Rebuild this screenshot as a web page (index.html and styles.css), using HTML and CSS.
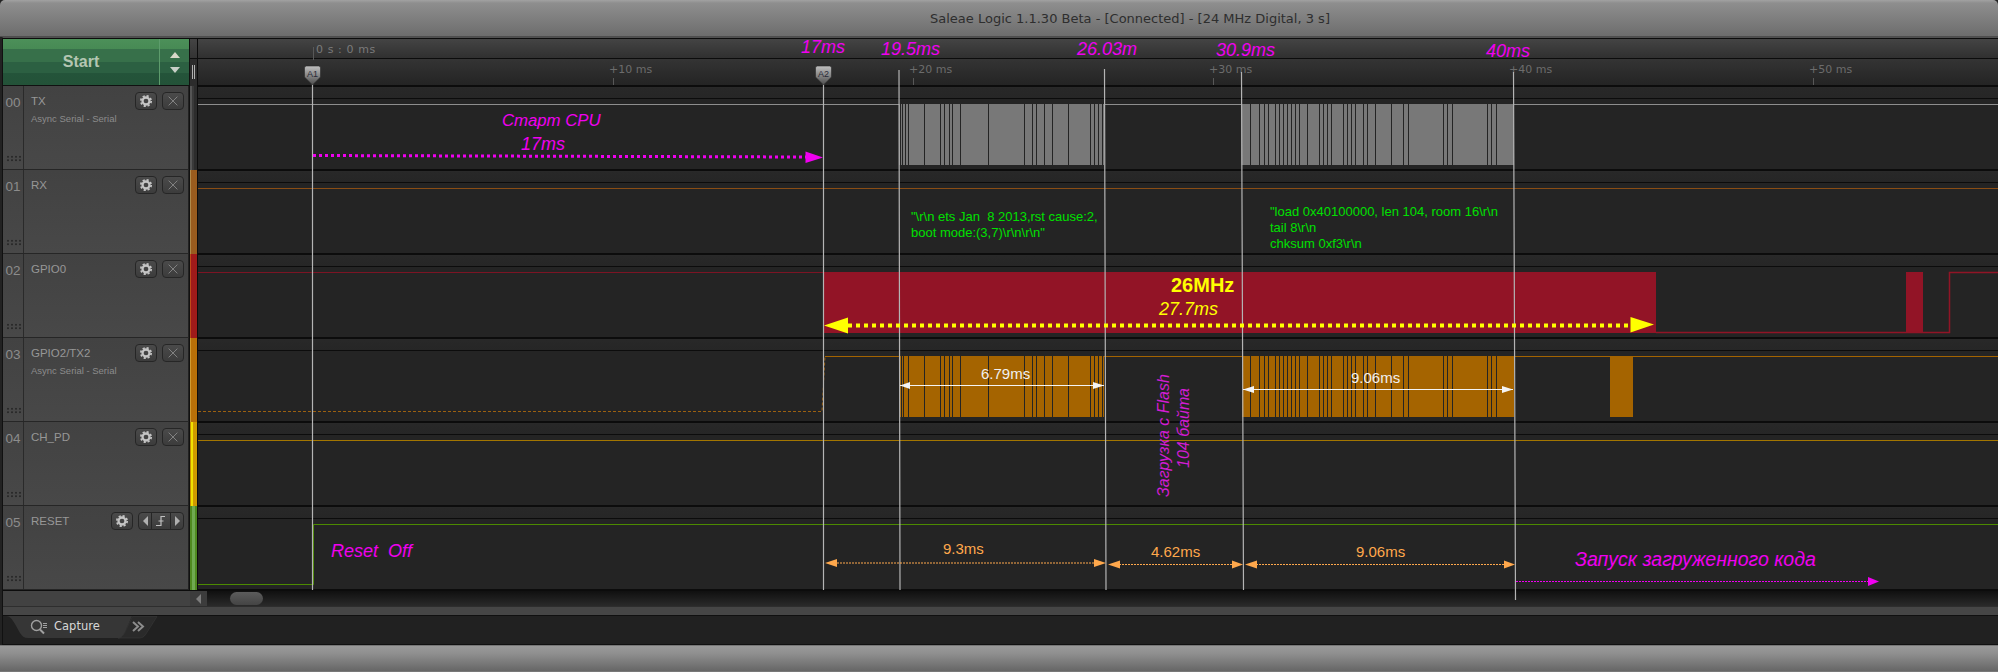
FILE: index.html
```html
<!DOCTYPE html>
<html lang="en">
<head>
<meta charset="utf-8">
<title>Saleae Logic</title>
<link rel="stylesheet" href="styles.css">
</head>
<body>
<svg class="defs" width="0" height="0" aria-hidden="true">
  <defs>
    <symbol id="gear" viewBox="0 0 16 16">
      <circle cx="8" cy="8" r="4" fill="none" stroke="#c4c4c4" stroke-width="2.6"/>
      <circle cx="8" cy="8" r="5.9" fill="none" stroke="#c4c4c4" stroke-width="2" stroke-dasharray="2.5 2.13"/>
    </symbol>
    <symbol id="cross" viewBox="0 0 16 16">
      <path d="M3 3 13 13M13 3 3 13" stroke="#8a8a8a" stroke-width="1" fill="none"/>
    </symbol>
    <linearGradient id="pin" x1="0" y1="0" x2="0" y2="1">
      <stop offset="0" stop-color="#c0c0c0"/>
      <stop offset="1" stop-color="#4c4c4c"/>
    </linearGradient>
  </defs>
</svg>

<div class="app">
  <header class="titlebar">Saleae Logic 1.1.30 Beta - [Connected] - [24 MHz Digital, 3 s]</header>

  <div class="workspace">
    <div class="toprow">
      <div class="start">
        <div class="start-label">Start</div>
        <div class="start-arrows">
          <span class="tri tri-up"></span>
          <span class="tri tri-down"></span>
        </div>
      </div>
      <div class="strip-head"><div class="strip-head-top"></div><div class="strip-head-bot"><i></i><i></i></div></div>
      <div class="ruler">
        <div class="ruler-top"><span class="abs-time">0 s : 0 ms</span></div>
        <div class="ruler-bot">
          <span class="tick">+10 ms</span>
          <span class="tick">+20 ms</span>
          <span class="tick">+30 ms</span>
          <span class="tick">+40 ms</span>
          <span class="tick">+50 ms</span>
        </div>
      </div>
    </div>

    <div class="channels">
      <!-- 00 -->
      <div class="channel">
        <div class="ch-head">
          <div class="ch-num">00<span class="grip"></span></div>
          <div class="ch-info">
            <div class="ch-top"><span class="ch-name">TX</span>
              <span class="btn"><svg class="ico"><use href="#gear"/></svg></span>
              <span class="btn"><svg class="ico"><use href="#cross"/></svg></span></div>
            <div class="ch-sub">Async Serial - Serial</div>
          </div>
        </div>
        <div class="strip strip-gray"></div>
        <div class="ch-wave">
          <svg class="wave" viewBox="198 0 1800 84">
            <path class="l-gray" d="M198 18.5H900M1104 18.5H1242M1514 18.5H1998"/>
            <rect class="b-gray" x="899" y="18" width="205" height="61"/>
            <rect class="b-gray" x="1241.5" y="18" width="272.5" height="61"/>
            <path class="stripes" d="M900.5 18V79M902.5 18V79M905.5 18V79M908.5 18V79M924.5 18V79M940.5 18V79M944.5 18V79M949.5 18V79M952.5 18V79M960.5 18V79M988.5 18V79M1024.5 18V79M1032.5 18V79M1036.5 18V79M1044.5 18V79M1052.5 18V79M1068.5 18V79M1090.5 18V79M1094.5 18V79M1098.5 18V79M1102.5 18V79"/>
            <path class="stripes" d="M1250.5 18V79M1259.5 18V79M1264.5 18V79M1268.5 18V79M1275.5 18V79M1279.5 18V79M1283.5 18V79M1287.5 18V79M1291.5 18V79M1295.5 18V79M1299.5 18V79M1307.5 18V79M1319.5 18V79M1323.5 18V79M1327.5 18V79M1331.5 18V79M1343.5 18V79M1347.5 18V79M1351.5 18V79M1355.5 18V79M1363.5 18V79M1367.5 18V79M1375.5 18V79M1391.5 18V79M1403.5 18V79M1408.5 18V79M1443.5 18V79M1447.5 18V79M1452.5 18V79M1487.5 18V79M1491.5 18V79M1496.5 18V79"/>
          </svg>
        </div>
      </div>
      <!-- 01 -->
      <div class="channel">
        <div class="ch-head">
          <div class="ch-num">01<span class="grip"></span></div>
          <div class="ch-info">
            <div class="ch-top"><span class="ch-name">RX</span>
              <span class="btn"><svg class="ico"><use href="#gear"/></svg></span>
              <span class="btn"><svg class="ico"><use href="#cross"/></svg></span></div>
          </div>
        </div>
        <div class="strip strip-brown"></div>
        <div class="ch-wave">
          <svg class="wave" viewBox="198 0 1800 84">
            <path class="l-brown" d="M198 18.5H1998"/>
          </svg>
        </div>
      </div>
      <!-- 02 -->
      <div class="channel">
        <div class="ch-head">
          <div class="ch-num">02<span class="grip"></span></div>
          <div class="ch-info">
            <div class="ch-top"><span class="ch-name">GPIO0</span>
              <span class="btn"><svg class="ico"><use href="#gear"/></svg></span>
              <span class="btn"><svg class="ico"><use href="#cross"/></svg></span></div>
          </div>
        </div>
        <div class="strip strip-red"></div>
        <div class="ch-wave">
          <svg class="wave" viewBox="198 0 1800 84">
            <path class="l-red" d="M198 18.5H824"/>
            <rect class="b-red" x="823.5" y="18" width="832.5" height="61"/>
            <rect class="b-red" x="1906" y="18" width="17" height="61"/>
            <path class="l-red2" d="M1656 78.5H1949.5V18.5H1998"/>
          </svg>
        </div>
      </div>
      <!-- 03 -->
      <div class="channel">
        <div class="ch-head">
          <div class="ch-num">03<span class="grip"></span></div>
          <div class="ch-info">
            <div class="ch-top"><span class="ch-name">GPIO2/TX2</span>
              <span class="btn"><svg class="ico"><use href="#gear"/></svg></span>
              <span class="btn"><svg class="ico"><use href="#cross"/></svg></span></div>
            <div class="ch-sub">Async Serial - Serial</div>
          </div>
        </div>
        <div class="strip strip-orange"></div>
        <div class="ch-wave">
          <svg class="wave" viewBox="198 0 1800 84">
            <path class="l-orange-d" d="M198 73.5H822L825 18.5"/>
            <path class="l-orange" d="M825 18.5H1998"/>
            <rect class="b-orange" x="900" y="18" width="204" height="61"/>
            <rect class="b-orange" x="1242" y="18" width="272" height="61"/>
            <rect class="b-orange" x="1610" y="18" width="23" height="61"/>
            <path class="stripes" d="M901.5 18V79M903.5 18V79M908.5 18V79M924.5 18V79M940.5 18V79M944.5 18V79M949.5 18V79M952.5 18V79M960.5 18V79M988.5 18V79M1024.5 18V79M1032.5 18V79M1036.5 18V79M1044.5 18V79M1052.5 18V79M1068.5 18V79M1090.5 18V79M1094.5 18V79M1098.5 18V79M1102.5 18V79"/>
            <path class="stripes" d="M1250.5 18V79M1259.5 18V79M1264.5 18V79M1268.5 18V79M1275.5 18V79M1279.5 18V79M1283.5 18V79M1287.5 18V79M1291.5 18V79M1295.5 18V79M1299.5 18V79M1307.5 18V79M1319.5 18V79M1323.5 18V79M1327.5 18V79M1331.5 18V79M1343.5 18V79M1347.5 18V79M1351.5 18V79M1355.5 18V79M1363.5 18V79M1367.5 18V79M1375.5 18V79M1391.5 18V79M1403.5 18V79M1408.5 18V79M1443.5 18V79M1447.5 18V79M1452.5 18V79M1487.5 18V79M1491.5 18V79M1496.5 18V79"/>
          </svg>
        </div>
      </div>
      <!-- 04 -->
      <div class="channel">
        <div class="ch-head">
          <div class="ch-num">04<span class="grip"></span></div>
          <div class="ch-info">
            <div class="ch-top"><span class="ch-name">CH_PD</span>
              <span class="btn"><svg class="ico"><use href="#gear"/></svg></span>
              <span class="btn"><svg class="ico"><use href="#cross"/></svg></span></div>
          </div>
        </div>
        <div class="strip strip-yellow"></div>
        <div class="ch-wave">
          <svg class="wave" viewBox="198 0 1800 84">
            <path class="l-yellow" d="M198 18.5H1998"/>
          </svg>
        </div>
      </div>
      <!-- 05 -->
      <div class="channel">
        <div class="ch-head">
          <div class="ch-num">05<span class="grip"></span></div>
          <div class="ch-info">
            <div class="ch-top"><span class="ch-name">RESET</span>
              <span class="btn"><svg class="ico"><use href="#gear"/></svg></span>
              <span class="btn-group">
                <span class="seg seg-s"><span class="tri-l"></span></span>
                <span class="seg seg-m"><svg class="edge" viewBox="0 0 14 14"><path d="M2 11.5H7V2.5H11M4.5 7H9.5" stroke="#c0c0c0" stroke-width="1.2" fill="none"/></svg></span>
                <span class="seg seg-s"><span class="tri-r"></span></span>
              </span></div>
          </div>
        </div>
        <div class="strip strip-green"></div>
        <div class="ch-wave">
          <svg class="wave" viewBox="198 0 1800 84">
            <path class="l-green" d="M198 78.5H313.5V18.5H1998"/>
          </svg>
        </div>
      </div>
    </div>

    <div class="scrollrow">
      <div class="scroll-left"></div>
      <div class="scroll-btn"><span class="tri-l tri-dim"></span></div>
      <div class="scroll-track"><div class="thumb"></div></div>
    </div>
    <div class="band"></div>
    <div class="tabs">
      <svg class="tabshape" viewBox="0 0 160 28">
        <path class="tab1" d="M0 0H3C7 0 9 3 12 8L17 17C19 20 21 22 25 22H115C118 22 120 20 122 16L129 0Z"/>
        <path class="tab2" d="M115 22C118 22 120 20 122 16L129.500 0.500H154L143 18C141 21 139 22 136 22Z"/>
        <circle cx="33.500" cy="9.500" r="5" fill="none" stroke="#a0a0a0" stroke-width="1.400"/>
        <path d="M37 13.500 41 17.500" stroke="#a0a0a0" stroke-width="2" fill="none"/>
        <path d="M40 7.500H44M40 9.500H44M40 11.500H44" stroke="#a0a0a0" stroke-width="1" fill="none"/>
        <path d="M130 6 135 10.500 130 15M135 6 140 10.500 135 15" stroke="#8c8c8c" stroke-width="2" fill="none"/>
      </svg>
      <span class="tab-label">Capture</span>
    </div>
  </div>
  <footer class="statusbar"></footer>
</div>

<svg class="overlay" viewBox="0 0 1998 672">
  <!-- ruler ticks -->
  <path class="ruler-tick" d="M313.500 47V60M613.500 78V85M913.500 78V85M1213.500 78V85M1513.500 78V85M1813.500 78V85"/>

  <!-- cursors -->
  <path class="cursor" d="M312.500 84V590M823.500 84V590M899 70 900 590M1104.500 69 1106 590M1241.500 72 1243.500 590M1513.500 72 1515.500 600"/>
  <g class="pin">
    <path d="M304.500 68Q304.500 66 306.500 66H318.500Q320.500 66 320.500 68V77L312.500 85 304.500 77Z"/>
    <text x="312.500" y="77">A1</text>
  </g>
  <g class="pin">
    <path d="M815.500 68Q815.500 66 817.500 66H829.500Q831.500 66 831.500 68V77L823.500 85 815.500 77Z"/>
    <text x="823.500" y="77">A2</text>
  </g>

  <!-- top labels -->
  <text class="magenta" x="801" y="53">17ms</text>
  <text class="magenta" x="881" y="55">19.5ms</text>
  <text class="magenta" x="1077" y="55">26.03m</text>
  <text class="magenta" x="1216" y="56">30.9ms</text>
  <text class="magenta" x="1486" y="57">40ms</text>

  <!-- start CPU -->
  <text class="magenta m-narrow" x="502" y="126">Старт CPU</text>
  <text class="magenta" x="521" y="150">17ms</text>
  <path class="dots-m" d="M313 155.500 806 157"/>
  <path class="fill-m" d="M805.500 151.500 823 157.500 805.500 163Z"/>

  <!-- decoded text -->
  <text class="decoded" x="911" y="221">"\r\n ets Jan  8 2013,rst cause:2,</text>
  <text class="decoded" x="911" y="237">boot mode:(3,7)\r\n\r\n"</text>
  <text class="decoded" x="1270" y="216">"load 0x40100000, len 104, room 16\r\n</text>
  <text class="decoded" x="1270" y="232">tail 8\r\n</text>
  <text class="decoded" x="1270" y="248">chksum 0xf3\r\n</text>

  <!-- 26 MHz -->
  <text class="yellow-b" x="1171" y="292">26MHz</text>
  <text class="yellow-i" x="1159" y="315">27.7ms</text>
  <path class="dots-y" d="M848 325.500H1630"/>
  <path class="fill-y" d="M824 325.500 848 317.500V333.500Z"/>
  <path class="fill-y" d="M1630.500 317 1654 324.500 1630.500 332.500Z"/>

  <!-- white dims -->
  <text class="white" x="981" y="379">6.79ms</text>
  <path class="dim-w" d="M900 385.500H1104"/>
  <path class="fill-w" d="M900 385.500 910 382V389ZM1104 385.500 1093 382V389Z"/>
  <text class="white" x="1351" y="383">9.06ms</text>
  <path class="dim-w" d="M1243 389.500H1513"/>
  <path class="fill-w" d="M1243 389.500 1254 386V393ZM1513 389.500 1502 386V393Z"/>

  <!-- rotated -->
  <text class="rot" transform="translate(1169 497) rotate(-90)">Загрузка с Flash</text>
  <text class="rot" transform="translate(1189 468) rotate(-90)">104 байта</text>

  <!-- reset row -->
  <text class="magenta" x="331" y="557">Reset  Off</text>
  <text class="amber" x="943" y="554">9.3ms</text>
  <text class="amber" x="1151" y="557">4.62ms</text>
  <text class="amber" x="1356" y="557">9.06ms</text>
  <path class="dim-a" d="M834 563H1096M1119 564.500H1232M1256 564.500H1506"/>
  <path class="fill-a" d="M825 563 837 559V567ZM1106 563 1094 559V567ZM1108 564.500 1120 560.500V568.500ZM1243 564.500 1232 560.500V568.500ZM1245 564.500 1257 560.500V568.500ZM1515 564.500 1504 560.500V568.500Z"/>
  <text class="magenta m-wide" x="1575" y="566">Запуск загруженного кода</text>
  <path class="dim-m" d="M1516 581.500H1868"/>
  <path class="fill-m" d="M1868 577 1879 581.500 1868 586Z"/>
</svg>
</body>
</html>
```
FILE: styles.css
```css
html, body { margin: 0; padding: 0; }
body { width: 1998px; height: 672px; overflow: hidden; background: #222; font-family: "Liberation Sans", Arial, sans-serif; position: relative; }
.defs { position: absolute; }
.app { width: 1998px; height: 672px; display: flex; flex-direction: column; }

.titlebar {
  height: 37px; flex: none; box-sizing: border-box; padding: 11px 0 0 262px; text-align: center;
  font: 13px/15px "DejaVu Sans", sans-serif; color: #2e2e2e;
  background: linear-gradient(#a2a2a2 0, #8e8e8e 3px, #7b7b7b 22px, #6c6c6c 37px);
  border-top-left-radius: 5px; border-top-right-radius: 5px;
  border-bottom: 1px solid #4e4e4e;
}

.workspace { flex: 1; display: flex; flex-direction: column; background: #202020; border-top: 1px solid #505050; margin-left: 2px; border-left: 1px solid #111; min-height: 0; border-bottom: 1px solid #111; }

.toprow { height: 47px; flex: none; display: flex; border-top: 1px solid #0c0c0c; }
.start { width: 186px; flex: none; display: flex; border-right: 1px solid #111;
  background: linear-gradient(#4c9059 0, #478a54 10px, #37704a 10px, #37704a 23px, #2c6042 23px, #2c6042 34px, #24543a 34px, #235238 46px);
  height: 46px; border-bottom: 1px solid #111; }
.start-label { flex: 1; text-align: center; font-size: 16px; font-weight: 700; line-height: 46px; color: #b4c6b2; border-right: 1px solid #5d9c6c; }
.start-arrows { width: 29px; flex: none; display: flex; flex-direction: column; align-items: center; gap: 9px; padding-top: 13px; box-sizing: border-box; }
.tri { display: block; width: 0; height: 0; border-left: 5.500px solid transparent; border-right: 5.500px solid transparent; }
.tri-up { border-bottom: 6px solid #d8d8c8; }
.tri-down { border-top: 6px solid #c8d0c8; }

.strip-head { width: 7px; flex: none; border-right: 1px solid #0c0c0c; background: #333; }
.strip-head-top { height: 20px; box-sizing: border-box; background: linear-gradient(#444, #333); border-bottom: 1px solid #0c0c0c; }
.strip-head-bot { height: 27px; display: flex; gap: 1px; justify-content: center; padding-top: 6px; box-sizing: border-box; background: #2c2c2c; }
.strip-head-bot i { display: block; width: 1px; height: 14px; background: #b0b0b0; }

.ruler { flex: 1; min-width: 0; overflow: hidden; display: flex; flex-direction: column; }
.ruler-top { height: 20px; box-sizing: border-box; background: linear-gradient(#444, #303030); border-bottom: 1px solid #0c0c0c; padding-left: 118px; }
.abs-time { font: 11px/18px "DejaVu Sans", sans-serif; color: #7a7a7a; letter-spacing: 0.600px; }
.ruler-bot { height: 27px; box-sizing: border-box; background: linear-gradient(#343434, #242424); border-bottom: 1px solid #0c0c0c; padding-left: 411px; display: flex; }
.tick { width: 300px; flex: none; font: 11px/22px "DejaVu Sans", sans-serif; color: #6c6c6c; }

.channels { display: flex; flex-direction: column; flex: none; }
.channel { height: 84px; display: flex; }
.ch-head { width: 186px; flex: none; display: flex; box-sizing: border-box; border-bottom: 1px solid #262626; background: linear-gradient(#424242, #484848); border-right: 1px solid #222; }
.ch-num { width: 21px; flex: none; box-sizing: border-box; border-right: 1px solid #2a2a2a; font-size: 13.500px; color: #8c8c8c; text-align: center; padding-top: 9px; position: relative; }
.grip { position: absolute; left: 3px; bottom: 7px; width: 15px; height: 7px; background-image: radial-gradient(circle, #2a2a2a 0, #2a2a2a 1px, transparent 1.200px); background-size: 4px 3.500px; }
.ch-info { flex: 1; min-width: 0; padding: 6px 4px 0 7px; }
.ch-top { display: flex; align-items: center; gap: 5px; height: 18px; }
.ch-name { flex: 1; font-size: 11.500px; color: #979797; }
.ch-sub { font-size: 9.500px; color: #8c8c8c; margin-top: 3px; }
.btn { width: 22px; height: 18px; flex: none; box-sizing: border-box; border: 1px solid #262626; border-radius: 4px; background: linear-gradient(#4a4a4a, #3c3c3c); display: flex; align-items: center; justify-content: center; }
.ico { width: 14px; height: 14px; }
.btn-group { width: 46px; height: 18px; flex: none; box-sizing: border-box; border: 1px solid #262626; border-radius: 4px; background: linear-gradient(#4a4a4a, #3c3c3c); display: flex; }
.seg { display: flex; align-items: center; justify-content: center; }
.seg-s { width: 12px; flex: none; }
.seg-m { flex: 1; border-left: 1px solid #262626; border-right: 1px solid #262626; }
.edge { width: 14px; height: 14px; }
.tri-l { display: block; width: 0; height: 0; border-top: 5px solid transparent; border-bottom: 5px solid transparent; border-right: 5px solid #b0b0b0; }
.tri-r { display: block; width: 0; height: 0; border-top: 5px solid transparent; border-bottom: 5px solid transparent; border-left: 5px solid #b0b0b0; }
.tri-dim { border-right-color: #7d7d7d; }

.strip { width: 7px; border-left: 1px solid #111; border-right: 1px solid #0c0c0c; flex: none; }
.strip-gray { background: linear-gradient(90deg, #555 0 2px, #3a3a3a 2px 4px, #2c2c2c 4px); }
.strip-brown { background: linear-gradient(90deg, #b08a4a 0 1px, #9a5c1e 1px); }
.strip-red { background: linear-gradient(90deg, #c04a18 0 1px, #a01a1a 1px); }
.strip-orange { background: linear-gradient(90deg, #d09a30 0 1px, #b87008 1px); }
.strip-yellow { background: linear-gradient(90deg, #c98f00 0 1px, #f0e000 1px 3px, #d09a00 3px); }
.strip-green { background: linear-gradient(90deg, #4f8a20 0 2px, #6faa50 2px 5px, #4f8a20 5px); }

.ch-wave { flex: 1; min-width: 0; box-sizing: border-box; background: linear-gradient(#2a2a2a 0, #282828 1px, #262626 11px, #0c0c0c 11px, #0c0c0c 12px, #242424 12px); border-top: 1px solid #0c0c0c; border-bottom: 1px solid #0c0c0c; overflow: hidden; }
.wave { display: block; width: 1800px; height: 84px; margin-top: -1px; }
.l-gray, .l-brown, .l-red, .l-red2, .l-orange, .l-orange-d, .l-yellow, .l-green { fill: none; stroke-width: 1; }
.l-gray { stroke: #8e8e8e; }
.l-brown { stroke: #8a4d14; }
.l-red { stroke: #7c1424; }
.l-red2 { stroke: #911426; stroke-width: 1.500; }
.l-orange { stroke: #a36300; }
.l-orange-d { stroke: #9c6010; stroke-dasharray: 3 2; }
.l-yellow { stroke: #a37600; }
.l-green { stroke: #4c8a00; }
.b-gray { fill: #787878; }
.b-red { fill: #921426; }
.b-orange { fill: #a56400; }
.stripes { stroke: #242424; stroke-width: 1; fill: none; }

.scrollrow { height: 15px; flex: none; display: flex; border-top: 1px solid #0c0c0c; }
.scroll-left { width: 187px; flex: none; background: #424242; }
.scroll-btn { width: 17px; flex: none; background: #3c3c3c; display: flex; align-items: center; justify-content: center; }
.scroll-track { flex: 1; background: linear-gradient(#101010, #2a2a2a); padding: 1px 0 0 23px; }
.thumb { width: 33px; height: 13px; border-radius: 6.500px; background: linear-gradient(#5c5c5c, #444); }
.band { height: 8px; flex: none; background: #464646; border-top: 1px solid #2e2e2e; border-bottom: 1px solid #101010; }
.tabs { flex: 1; position: relative; background: #212121; min-height: 0; }
.tabshape { position: absolute; left: 0; top: 0; width: 160px; height: 28px; }
.tab1 { fill: #363636; }
.tab2 { fill: #2a2a2a; stroke: #3c3c3c; stroke-width: 0.500; }
.tab-label { position: absolute; left: 51px; top: 3px; font: 11.500px/15px "DejaVu Sans", sans-serif; color: #d6d6d6; }

.statusbar { height: 27px; flex: none; box-sizing: border-box; background: linear-gradient(#9a9a9a 0, #8e8e8e 8px, #666 25px, #8a8a8a 26px); border-top: 1px solid #777; }

.overlay { position: absolute; left: 0; top: 0; width: 1998px; height: 672px; pointer-events: none; }
.overlay text { font-family: "Liberation Sans", Arial, sans-serif; white-space: pre; }
.ruler-tick { stroke: #585858; stroke-width: 1; fill: none; }
.cursor { stroke: #b4b4b4; stroke-width: 1.200; fill: none; }
.pin path { fill: url(#pin); stroke: #2a2a2a; stroke-width: 0.600; }
.pin text { font-size: 9px; fill: #2a2a38; text-anchor: middle; }
.overlay .magenta { font-size: 18px; font-style: italic; fill: #f000f0; }
.overlay .m-narrow { font-size: 16.800px; }
.overlay .m-wide { font-size: 19.500px; }
.overlay .decoded { font-size: 13px; fill: #00e000; }
.overlay .yellow-b { font-size: 20px; font-weight: 700; fill: #ffff00; }
.overlay .yellow-i { font-size: 18px; font-style: italic; fill: #ffff00; }
.overlay .white { font-size: 15px; fill: #f0f0f0; }
.overlay .amber { font-size: 15px; fill: #ffa84c; }
.overlay .rot { font-size: 16px; font-style: italic; fill: #d21cd2; }
.dots-m { stroke: #f000f0; stroke-width: 3; stroke-dasharray: 3 3; fill: none; }
.dots-y { stroke: #ffff00; stroke-width: 4; stroke-dasharray: 4 4; fill: none; }
.fill-m { fill: #f000f0; }
.fill-y { fill: #ffff00; }
.fill-w { fill: #f4f4f4; }
.fill-a { fill: #ffa84c; }
.dim-w { stroke: #f4f4f4; stroke-width: 1; fill: none; }
.dim-a { stroke: #ffa84c; stroke-width: 1; stroke-dasharray: 2 1; fill: none; }
.dim-m { stroke: #f000f0; stroke-width: 1; stroke-dasharray: 2 1; fill: none; }
```
